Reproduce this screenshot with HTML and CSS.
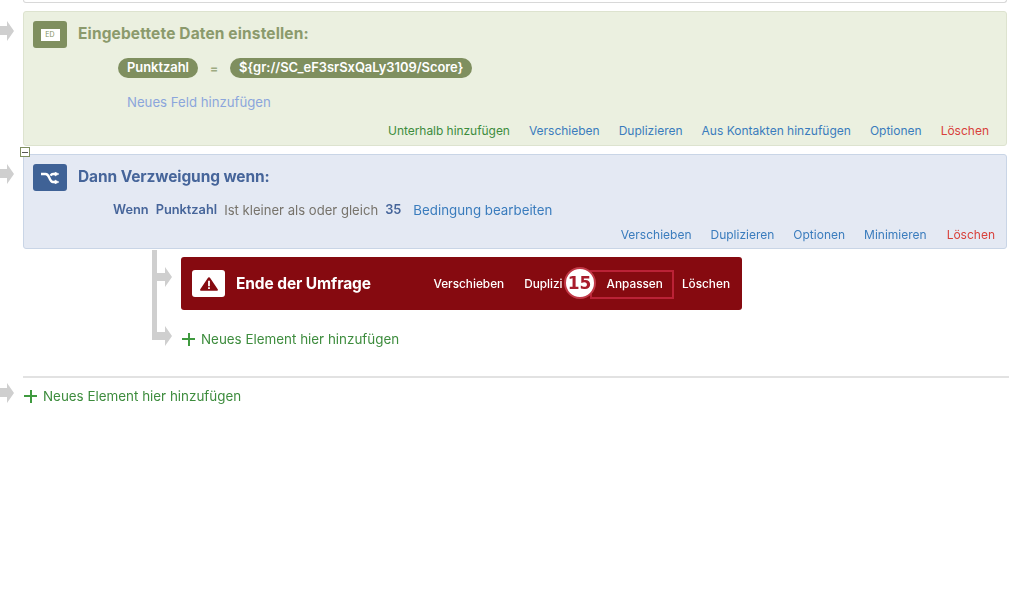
FILE: index.html
```html
<!doctype html>
<html>
    <head>
        <meta charset="utf-8">
        <title>Survey Flow</title>
        <link rel="stylesheet" href="styles.css">
    </head>
    <body>
        <div class="flow">
            <div class="flowTop"></div>

            <div class="flowRow">
                <svg class="arrow" width="23" height="24" viewBox="0 0 23 24"><path d="M0 7h7V2l7 10-7 10v-6H0z"/></svg>
                <div class="card green">
                    <div class="cardHead">
                        <div class="cardIcon"><span class="edLabel">ED</span></div>
                        <h2>Eingebettete Daten einstellen:</h2>
                    </div>
                    <div class="pillRow">
                        <span class="pill">Punktzahl</span>
                        <span class="equals">=</span>
                        <span class="pill">${gr://SC_eF3srSxQaLy3109/Score}</span>
                    </div>
                    <a class="addField">Neues Feld hinzufügen</a>
                    <div class="links">
                        <a class="add">Unterhalb hinzufügen</a>
                        <a>Verschieben</a>
                        <a>Duplizieren</a>
                        <a>Aus Kontakten hinzufügen</a>
                        <a>Optionen</a>
                        <a class="del">Löschen</a>
                    </div>
                </div>
            </div>

            <div class="flowRow branchRow">
                <svg class="arrow" width="23" height="24" viewBox="0 0 23 24"><path d="M0 7h7V2l7 10-7 10v-6H0z"/></svg>
                <div class="card blue">
                    <span class="collapse"></span>
                    <div class="cardHead">
                        <div class="cardIcon">
                            <svg width="18" height="12" viewBox="0 0 18 12"><path d="M0 2h4.500c2 0 2.700 1 3.700 3.500S10 10 12 10h2.500M9.500 3.700C10.300 2.500 11 2 12 2h2.500" fill="none" stroke="#fff" stroke-width="2.400"/><path d="M14 0l4 2-4 2zM14 8l4 2-4 2z" fill="#fff" stroke="#fff" stroke-width="0.500"/></svg>
                        </div>
                        <h2>Dann Verzweigung wenn:</h2>
                    </div>
                    <div class="condition">
                        <b>Wenn</b>
                        <b>Punktzahl</b>
                        <span>Ist kleiner als oder gleich</span>
                        <b>35</b>
                        <a>Bedingung bearbeiten</a>
                    </div>
                    <div class="links">
                        <a>Verschieben</a>
                        <a>Duplizieren</a>
                        <a>Optionen</a>
                        <a>Minimieren</a>
                        <a class="del">Löschen</a>
                    </div>
                </div>
            </div>

            <div class="branch">
                <svg class="branchLine" width="29" height="100" viewBox="0 0 29 100"><path d="M0 0h5v23h8v-6l7 10-7 10v-6H5v51h8v-6l7 10-7 10v-6H0z"/></svg>
                <div class="branchBody">
                    <div class="endCard">
                        <div class="endIcon">
                            <svg width="18" height="14" viewBox="0 0 20 15"><path d="M10 0c.6 0 1 .3 1.300.8l8.400 12.400c.5.800 0 1.800-1 1.800H1.300c-1 0-1.500-1-1-1.800L8.700.8C9 .3 9.400 0 10 0z" fill="#860a10"/><path d="M9 4h2v6H9zM9 11h2v2H9z" fill="#fff"/></svg>
                        </div>
                        <h2>Ende der Umfrage</h2>
                        <div class="endLinks">
                            <a>Verschieben</a>
                            <a>Duplizi</a>
                            <a class="customize"><span class="badge">15</span>Anpassen</a>
                            <a class="endDelete">Löschen</a>
                        </div>
                    </div>
                    <a class="addItem"><span class="plus"></span>Neues Element hier hinzufügen</a>
                </div>
            </div>

            <div class="divider"></div>

            <div class="flowRow lastRow">
                <svg class="arrow" width="23" height="24" viewBox="0 0 23 24"><path d="M0 7h7V2l7 10-7 10v-6H0z"/></svg>
                <a class="addItem"><span class="plus"></span>Neues Element hier hinzufügen</a>
            </div>
        </div>
    </body>
</html>
```
FILE: styles.css
```css
html, body {
    margin: 0;
    background-color: #fff;
}
body {
    font-family: "Inter", "Liberation Sans", sans-serif;
    font-size: 12px;
    color: #444;
    overflow: hidden;
}
h2 {
    margin: 0;
    font-size: 15.5px;
    font-weight: 700;
    letter-spacing: -0.1px;
}
a {
    color: #3a7cbd;
    white-space: nowrap;
}

div.flow {
    height: 597px;
    filter: blur(0.5px);
}
div.flowTop {
    box-sizing: border-box;
    height: 3px;
    margin: 0 17px 8px 23px;
    border: 1px solid #d8d8d8;
    border-top: 0;
    border-radius: 0 0 3px 3px;
}

div.flowRow {
    display: flex;
    align-items: flex-start;
}
div.branchRow {
    margin-top: 8px;
}
svg.arrow {
    flex: none;
    margin-top: 8px;
    fill: #cfcfcf;
}

div.card {
    position: relative;
    box-sizing: border-box;
    width: 984px;
    border-radius: 3px;
}
div.cardHead {
    display: flex;
    align-items: center;
    gap: 11px;
}
div.cardHead h2 {
    padding-bottom: 3px;
}
div.cardIcon {
    display: flex;
    align-items: center;
    justify-content: center;
    width: 34px;
    height: 27px;
    border-radius: 3px;
}
div.links {
    display: flex;
    justify-content: flex-end;
    gap: 19px;
}
a.del {
    color: #d8413b;
}
a.add {
    color: #3d8c3d;
    letter-spacing: -0.05px;
}

div.green {
    height: 135px;
    padding: 9px 17px 0 9px;
    background-color: #ebf0e0;
    border: 1px solid #dde3cf;
}
div.green div.cardIcon {
    background-color: #7f8f5f;
}
div.green h2 {
    color: #8b9a6c;
    letter-spacing: 0.13px;
}
span.edLabel {
    width: 19px;
    height: 12px;
    font-size: 7px;
    line-height: 12px;
    text-align: center;
    color: #7f8f5f;
    background-color: #fff;
}
div.pillRow {
    display: flex;
    align-items: center;
    margin: 10px 0 0 85px;
}
span.pill {
    height: 20px;
    padding: 0 9px;
    border-radius: 10px;
    font-size: 12.9px;
    font-weight: 600;
    line-height: 20px;
    color: #fff;
    background-color: #7f8f5f;
}
span.equals {
    width: 32px;
    font-weight: 700;
    text-align: center;
    color: #9dab82;
}
a.addField {
    display: block;
    margin: 16px 0 0 94px;
    font-size: 13.2px;
    line-height: 16px;
    color: #8ba6dc;
}
div.green div.links {
    margin-top: 13px;
}

div.blue {
    height: 95px;
    padding: 9px 11px 0 9px;
    background-color: #e4e9f3;
    border: 1px solid #c9d5e6;
}
div.blue div.cardIcon {
    background-color: #3f6296;
}
div.blue h2 {
    color: #46659a;
}
span.collapse {
    position: absolute;
    top: -8px;
    left: -4px;
    box-sizing: border-box;
    width: 10px;
    height: 10px;
    border: 1px solid #7f8f5f;
    background: linear-gradient(#555, #555) center / 6px 1px no-repeat #fff;
}
div.condition {
    display: flex;
    align-items: center;
    gap: 7px;
    margin: 11px 0 0 80px;
    font-size: 13.1px;
    line-height: 16px;
    color: #77736b;
}
div.condition b {
    color: #46659a;
    font-size: 12.8px;
    font-weight: 600;
}
div.condition a {
    margin-left: 5px;
    font-size: 13.3px;
}
div.blue div.links {
    margin-top: 9px;
}
div.blue a.del {
    margin-left: 1px;
}

div.branch {
    display: flex;
    padding-left: 152px;
}
svg.branchLine {
    flex: none;
    fill: #cfcfcf;
    margin-top: 1px;
}
div.branchBody {
    padding-top: 8px;
}
div.endCard {
    display: flex;
    align-items: center;
    box-sizing: border-box;
    width: 561px;
    height: 53px;
    padding: 0 12px 0 11px;
    border-radius: 3px;
    color: #fff;
    background-color: #860a10;
}
div.endIcon {
    display: flex;
    align-items: center;
    justify-content: center;
    width: 33px;
    height: 27px;
    margin-right: 11px;
    border-radius: 3px;
    background-color: #fff;
}
div.endLinks {
    display: flex;
    align-items: center;
    margin-left: auto;
    font-size: 11.8px;
}
div.endLinks a {
    color: #fff;
    font-weight: 500;
    margin-left: 20px;
}
div.endLinks a.customize {
    position: relative;
    box-sizing: border-box;
    height: 29px;
    margin: 1px 0 0 27px;
    padding: 0 9px 0 15px;
    line-height: 25px;
    border: 2px solid #bb2236;
}
div.endLinks a.endDelete {
    margin-left: 8px;
}
span.badge {
    position: absolute;
    top: -5px;
    left: -28px;
    box-sizing: border-box;
    width: 32px;
    height: 32px;
    border: 2px solid #c23a48;
    border-radius: 50%;
    font-family: "DejaVu Sans", sans-serif;
    font-size: 17px;
    font-weight: 700;
    line-height: 28px;
    text-align: center;
    color: #a81c2c;
    background-color: #fff;
}

a.addItem {
    display: flex;
    align-items: center;
    gap: 6px;
    font-size: 13.4px;
    line-height: 16px;
    color: #3d8c3d;
}
div.branchBody a.addItem {
    margin-top: 21px;
}
span.plus {
    width: 13px;
    height: 13px;
    margin-left: 1px;
    background: linear-gradient(#3f9a3f, #3f9a3f) center / 13px 2px no-repeat,
                linear-gradient(#3f9a3f, #3f9a3f) center / 2px 13px no-repeat;
}
div.divider {
    height: 2px;
    margin: 26px 15px 0 23px;
    background-color: #e2e2e2;
}
div.lastRow {
    margin-top: 3px;
}
div.lastRow svg.arrow {
    margin-top: 0;
}
div.lastRow a.addItem {
    margin-top: 7px;
}
```
